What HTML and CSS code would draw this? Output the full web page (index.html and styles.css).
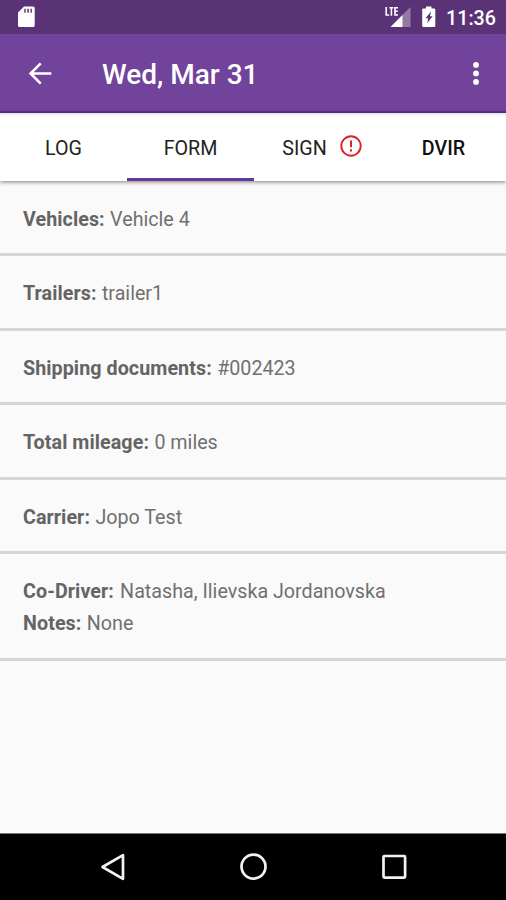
FILE: index.html
```html
<!DOCTYPE html>
<html lang="en">
<head>
<meta charset="utf-8">
<title>Wed, Mar 31</title>
<link rel="stylesheet" href="styles.css">
</head>
<body>
<div class="screen">
  <div class="status">
    <svg class="sd" width="17" height="22" viewBox="0 0 17 22"><path fill="#fff" fill-rule="evenodd" d="M6 .5h9.200q1.500 0 1.500 1.500v17.500q0 1.500-1.500 1.500H1.500Q0 21 0 19.500V6.500zM6.300 2.800v4h1.400v-4zM9.300 2.800v4h1.500v-4zM12.500 2.800v4h1.400v-4z"/></svg>
    <svg class="signal" width="26" height="22" viewBox="0 0 26 22"><g fill="none" stroke="#fff" stroke-width="1.600"><path d="M1.200 1v8h3M4.400 1.700h4M6.400 1.700V9.700M13 1.700H10V9H13M10 5.300h2.700"/></g><path fill="#fff" opacity=".35" d="M25.500 1v20H5.500z"/><path fill="#fff" d="M17.500 9v12h-12z"/></svg>
    <svg class="battery" width="14" height="22" viewBox="0 0 14 22"><path fill="#fff" fill-rule="evenodd" d="M4 .5h5.500v2H12q1.300 0 1.300 1.300v15.900q0 1.300-1.300 1.300H1.500Q.2 21 .2 19.700V3.800q0-1.300 1.300-1.300H4zM9 5.500 3.500 12.300h2.700l-1 5L10.600 10.300H7.900z"/></svg>
    <span class="clock">11:36</span>
  </div>
  <header class="bar">
    <svg class="back" width="24" height="24" viewBox="0 0 24 24" fill="none" stroke="#fff" stroke-width="2.600"><path d="M23.300 12.500H3M12.700 2.400 2.600 12.500l10.100 10.100"/></svg>
    <h1 class="title">Wed, Mar 31</h1>
    <svg class="more" width="8" height="24" viewBox="0 0 8 24" fill="#fff"><circle cx="4" cy="3.900" r="2.900"/><circle cx="4" cy="12.400" r="2.900"/><circle cx="4" cy="20.900" r="2.900"/></svg>
  </header>
  <nav class="tabs">
    <div class="tab">LOG</div>
    <div class="tab active">FORM</div>
    <div class="tab sign">SIGN<svg width="22" height="22" viewBox="0 0 22 22"><circle cx="11" cy="11" r="9.700" fill="none" stroke="#e02028" stroke-width="1.900"/><path stroke="#e02028" stroke-width="2" d="M11 5.500v6.800M11 14.300v2.100"/></svg></div>
    <div class="tab strong">DVIR</div>
  </nav>
  <main class="list">
    <div class="row"><p><b>Vehicles:</b> Vehicle 4</p></div>
    <div class="row"><p><b>Trailers:</b> trailer1</p></div>
    <div class="row"><p><b>Shipping documents:</b> #002423</p></div>
    <div class="row"><p><b>Total mileage:</b> 0 miles</p></div>
    <div class="row"><p><b>Carrier:</b> Jopo Test</p></div>
    <div class="row last"><p><b class="wide">Co-Driver:</b> Natasha, Ilievska Jordanovska</p><p><b>Notes:</b> None</p></div>
  </main>
  <footer class="nav">
    <svg width="28" height="28" viewBox="0 0 28 28"><path d="M24 2.200v23.600L3.500 14z"/></svg>
    <svg width="28" height="28" viewBox="0 0 28 28"><circle cx="14.500" cy="13.600" r="12"/></svg>
    <svg width="28" height="28" viewBox="0 0 28 28"><rect x="3.500" y="3" width="21.600" height="21.600" rx="1"/></svg>
  </footer>
</div>
</body>
</html>
```
FILE: styles.css
```css
body { margin: 0; font-family: Roboto, sans-serif; }
.screen { display: flex; flex-direction: column; width: 506px; height: 900px; background: #fafafa; overflow: hidden; }
.status { display: flex; align-items: center; box-sizing: border-box; height: 34px; padding: 1px 10px 0 18px; background: #5a3377; color: #fff; }
.sd, .signal, .battery { margin-top: -1px; }
.signal { margin-left: auto; }
.battery { margin-left: 11px; margin-right: 10px; }
.clock { width: 50px; padding-top: 2px; font-size: 19.700px; font-weight: 500; line-height: 32px; white-space: nowrap; }
.bar { display: flex; align-items: center; box-sizing: border-box; height: 79px; padding: 1px 26px 0 28px; background: #71439b; border-bottom: 2px solid #5f2f90; color: #fff; }
.title { margin: 4px 0 0 50px; font-size: 28px; font-weight: 500; line-height: 36px; white-space: nowrap; }
.more { margin-left: auto; }
.tabs { display: grid; grid-template-columns: 127px 127px 126px 126px; height: 68px; flex: none; background: #fff; box-shadow: 0 1px 4px rgba(0, 0, 0, .5), inset 0 3px 2px -1px #e8e8e8; }
.tab { display: flex; align-items: center; justify-content: center; box-sizing: border-box; border-bottom: 3px solid transparent; padding-top: 5px; font-size: 19.700px; color: #222; }
.active { border-color: #65369a; }
.sign { gap: 13px; padding-left: 10px; }
.sign svg { margin-top: -4px; }
.strong { padding-left: 1px; font-weight: 500; color: #111; }
.list { flex: 1; }
.row { box-sizing: border-box; height: 74.600px; padding: 22px 23px 0; border-bottom: 3px solid #d5d5d5; }
.row:first-child { height: 75px; padding-top: 23px; }
.last { height: 107px; }
.row p { margin: 0; font-size: 19.700px; line-height: 32px; color: #707070; white-space: nowrap; }
.row b { font-weight: 700; color: #646464; margin-right: .5px; letter-spacing: .07px; }
.row .wide { margin-right: 1.300px; }
.nav { display: grid; grid-template-columns: repeat(3, 140.500px); justify-content: center; justify-items: center; align-items: center; height: 66px; background: #000; border-top: 1px solid #777; }
.nav svg { fill: none; stroke: #f2f2f2; stroke-width: 2.700; stroke-linejoin: round; }
```
